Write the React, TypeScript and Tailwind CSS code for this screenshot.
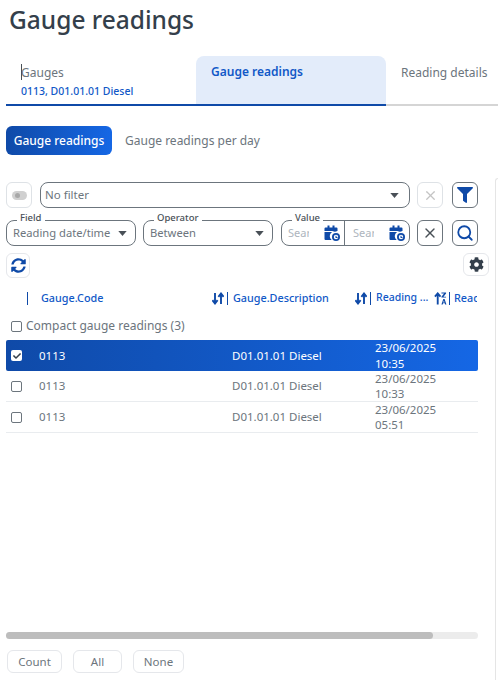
import React from "react";
import { FaCog, FaFilter, FaSyncAlt, FaCheck } from "react-icons/fa";
import { X, Search } from "lucide-react";

const Caret = ({ className = "" }: { className?: string }) => (
  <svg viewBox="0 0 10 6" className={"w-[9px] h-[5px] shrink-0 " + className} fill="#495057"><path d="M0 0h10L5 6z" /></svg>
);

const SortArrows = () => (
  <svg viewBox="0 0 12 13" className="w-[12px] h-[13px] shrink-0" fill="none" stroke="#0f4aa8" strokeWidth="1.9">
    <path d="M3 1v10.500M.4 8.200 3 11.500l2.600-3.300" />
    <path d="M9 12V1.500M6.400 4.800 9 1.500l2.600 3.300" />
  </svg>
);

const CalIcon = () => (
  <svg viewBox="0 0 16 16" className="w-4 h-4 shrink-0" fill="#0f4aa8">
    <path d="M.5 3.500a1 1 0 0 1 1-1h2V.500h2v2h3v-2h2v2h2a1 1 0 0 1 1 1V6H.5z" />
    <path d="M.5 7h13v.3A4.500 4.500 0 0 0 7.700 15H1.500a1 1 0 0 1-1-1z" />
    <circle cx="12" cy="12" r="4" />
    <circle cx="12" cy="12" r="2.200" fill="#fff" />
    <path d="M11.500 10.700h1v1.200h1v1h-2z" />
  </svg>
);

function Legend({ text, children, className = "" }: { text: string; children: React.ReactNode; className?: string }) {
  return (
    <div className={"relative border border-[#6c757d] rounded-lg h-[26px] shrink-0 " + className}>
      <span className="absolute left-[10px] -top-[10px] px-[3px] bg-white text-[9.5px] leading-[13px] h-[11px] font-medium text-[#495057]">{text}</span>
      {children}
    </div>
  );
}

const IconBtn = ({ children, className = "" }: { children: React.ReactNode; className?: string }) => (
  <button className={"w-[26px] h-[26px] rounded-md border flex items-center justify-center shrink-0 bg-white " + className}>{children}</button>
);

const rows = [
  { t: "10:35", sel: true },
  { t: "10:33", sel: false },
  { t: "05:51", sel: false },
];

export default function App() {
  return (
    <div className="relative w-[498px] h-[680px] bg-white overflow-hidden flex flex-col font-['Noto_Sans',sans-serif] text-[#495057]">
      <span className="absolute right-0 top-[178px] bottom-0 w-[3px] border-l border-t rounded-tl-md border-[#e5e5e5]" />

      <h1 className="text-[24.5px] leading-[34px] font-medium text-[#343f4b] pl-[9px] pt-[3px] h-[56px] shrink-0">Gauge readings</h1>

      <div className="flex h-[50px] ml-[6px] border-b-2 border-[#d5d5d5] shrink-0">
        <div className="w-[190px] -mb-[2px] border-b-2 border-[#0f4aa8] pl-[15px] pt-[8px] relative">
          <div className="text-[12px] leading-[17px] text-[#6c757d]">Gauges</div>
          <div className="text-[10.5px] leading-[15px] mt-[3px] font-medium text-[#1158c7]">0113, D01.01.01 Diesel</div>
          <span className="absolute left-[15px] top-[8px] w-px h-[16px] bg-[#495057]" />
        </div>
        <div className="w-[190px] -mb-[2px] border-b-2 border-[#0f4aa8] bg-[#e3ecfa] rounded-t-lg pl-[15px] pt-[7px] text-[12px] leading-[17px] font-semibold text-[#1158c7]">Gauge readings</div>
        <div className="pl-[15px] pt-[8px] text-[12px] leading-[17px] text-[#6c757d]">Reading details</div>
      </div>

      <div className="flex items-center ml-[6px] mt-[20px] h-[29px] shrink-0">
        <div className="w-[106px] h-[29px] rounded-md bg-gradient-to-r from-[#0f4aa8] to-[#1567e5] text-white text-[12px] font-medium flex items-center justify-center">Gauge readings</div>
        <div className="ml-[13px] text-[12px] text-[#6c757d]">Gauge readings per day</div>
      </div>

      <div className="flex items-center ml-[6px] mt-[27px] h-[26px] w-[472px] shrink-0">
        <IconBtn className="border-[#dee2e6]">
          <span className="w-[15px] h-[9px] rounded-full bg-[#d0d0d0] flex items-center pl-[3px]"><span className="w-[5px] h-[5px] rounded-full bg-[#a8a8a8]" /></span>
        </IconBtn>
        <div className="ml-[8px] w-[370px] h-[26px] rounded-lg border border-[#6c757d] flex items-center justify-between pl-[4px] pr-[10px] text-[11.5px] text-[#6c757d]">
          <span>No filter</span><Caret />
        </div>
        <IconBtn className="ml-[7px] border-[#dee2e6]"><X size={15} strokeWidth={2} className="text-[#c4c4c4]" /></IconBtn>
        <IconBtn className="ml-[9px] border-[#6c757d]"><FaFilter className="text-[#0f4aa8] text-[16px]" /></IconBtn>
      </div>

      <div className="flex items-end ml-[6px] mt-[12px] h-[26px] w-[472px] shrink-0">
        <Legend text="Field" className="w-[130px]">
          <div className="flex items-center justify-between pl-[6px] pr-[8px] h-[24px] text-[11.2px] whitespace-nowrap text-[#6c757d]"><span>Reading date/time</span><Caret /></div>
        </Legend>
        <Legend text="Operator" className="w-[130px] ml-[7px]">
          <div className="flex items-center justify-between pl-[6px] pr-[8px] h-[24px] text-[11.2px] text-[#6c757d]"><span>Between</span><Caret /></div>
        </Legend>
        <Legend text="Value" className="w-[129px] ml-[8px]">
          <div className="flex h-[24px] text-[11px] text-[#adb5bd]">
            <div className="w-[63px] flex items-center justify-between pl-[6px] pr-[4px] border-r border-[#6c757d]"><span className="w-[21px] overflow-hidden">Sear</span><CalIcon /></div>
            <div className="flex-1 flex items-center justify-between pl-[8px] pr-[4px]"><span className="w-[21px] overflow-hidden">Sear</span><CalIcon /></div>
          </div>
        </Legend>
        <IconBtn className="ml-[7px] border-[#6c757d]"><X size={16} strokeWidth={2} className="text-[#495057]" /></IconBtn>
        <IconBtn className="ml-[9px] border-[#6c757d]"><Search size={18} strokeWidth={2.4} className="text-[#0f4aa8]" /></IconBtn>
      </div>

      <div className="flex justify-between items-start ml-[6px] mt-[7px] h-[25px] w-[483px] shrink-0">
        <button className="w-[24px] h-[25px] rounded-md border border-[#e5e7eb] flex items-center justify-center"><FaSyncAlt className="text-[#0f4aa8] text-[15px]" /></button>
        <button className="w-[26px] h-[23px] rounded-md border border-[#e5e7eb] flex items-center justify-center"><FaCog className="text-[#343f4b] text-[15px]" /></button>
      </div>

      <div className="flex items-center h-[24px] mt-[8px] ml-[6px] w-[472px] text-[10.8px] font-medium text-[#1158c7] overflow-hidden whitespace-nowrap shrink-0">
        <span className="w-px h-[13px] bg-[#0f4aa8] ml-[21px] shrink-0" />
        <span className="ml-[13px] w-[171px] shrink-0">Gauge.Code</span>
        <SortArrows />
        <span className="w-px h-[13px] bg-[#0f4aa8] ml-[3px] shrink-0" />
        <span className="ml-[5px] w-[122px] shrink-0">Gauge.Description</span>
        <SortArrows />
        <span className="w-px h-[13px] bg-[#0f4aa8] ml-[3px] shrink-0" />
        <span className="ml-[5px] w-[58px] shrink-0 text-[10.5px]">Reading ...</span>
        <svg viewBox="0 0 14 14" className="w-[13px] h-[13px] shrink-0" fill="#0f4aa8"><path d="M4 13.500V2M1 5l3-3.500L7 5" fill="none" stroke="#0f4aa8" strokeWidth="2" /><path d="M8 .5h5v1.200L10.200 5H13v1H8V5l2.800-3.500H8zM8 13.500l2-6h1.400l2 6H12l-.4-1.300H9.800l-.4 1.300zM10 11.200h1.300l-.65-2z" /></svg>
        <span className="w-px h-[13px] bg-[#0f4aa8] ml-[2px] shrink-0" />
        <span className="ml-[4px] w-[23px] overflow-hidden shrink-0">Reading</span>
      </div>

      <label className="flex items-center ml-[11px] mt-[7px] h-[18px] text-[12px] text-[#6c757d] shrink-0">
        <span className="w-[11px] h-[11px] border border-[#6c757d] rounded-[2px]" />
        <span className="ml-[4px]">Compact gauge readings (3)</span>
      </label>

      <div className="ml-[6px] w-[472px] mt-[5px] shrink-0">
        {rows.map((r) => (
          <div key={r.t} className={"flex items-center h-[31px] text-[11.5px] " + (r.sel ? "rounded-[2px] bg-gradient-to-r from-[#0f4aa8] to-[#1567e5] text-white" : "border-b border-[#e9ecef] text-[#6c757d]")}>
            <span className={"ml-[5px] w-[11px] h-[11px] shrink-0 rounded-[2px] flex items-center justify-center " + (r.sel ? "bg-white" : "border border-[#6c757d]")}>
              {r.sel && <FaCheck className="text-[#343f4b] text-[8px]" />}
            </span>
            <span className="ml-[17px] w-[193px] shrink-0">0113</span>
            <span className="w-[143px] shrink-0">D01.01.01 Diesel</span>
            <span className="leading-[15.5px]">23/06/2025<br />{r.t}</span>
          </div>
        ))}
      </div>

      <div className="flex-1" />

      <div className="ml-[6px] w-[472px] h-[7px] rounded-full bg-[#ececec] shrink-0">
        <div className="w-[427px] h-[7px] rounded-full bg-[#bdbdbd]" />
      </div>

      <div className="flex items-center ml-[7px] mt-[11px] mb-[7px] h-[23px] text-[11.5px] text-[#6c757d] shrink-0">
        <button className="w-[55px] h-[23px] rounded-md border border-[#e5e7eb]">Count</button>
        <button className="w-[49px] h-[23px] ml-[11px] rounded-md border border-[#e5e7eb]">All</button>
        <button className="w-[51px] h-[23px] ml-[11px] rounded-md border border-[#e5e7eb]">None</button>
      </div>
    </div>
  );
}
